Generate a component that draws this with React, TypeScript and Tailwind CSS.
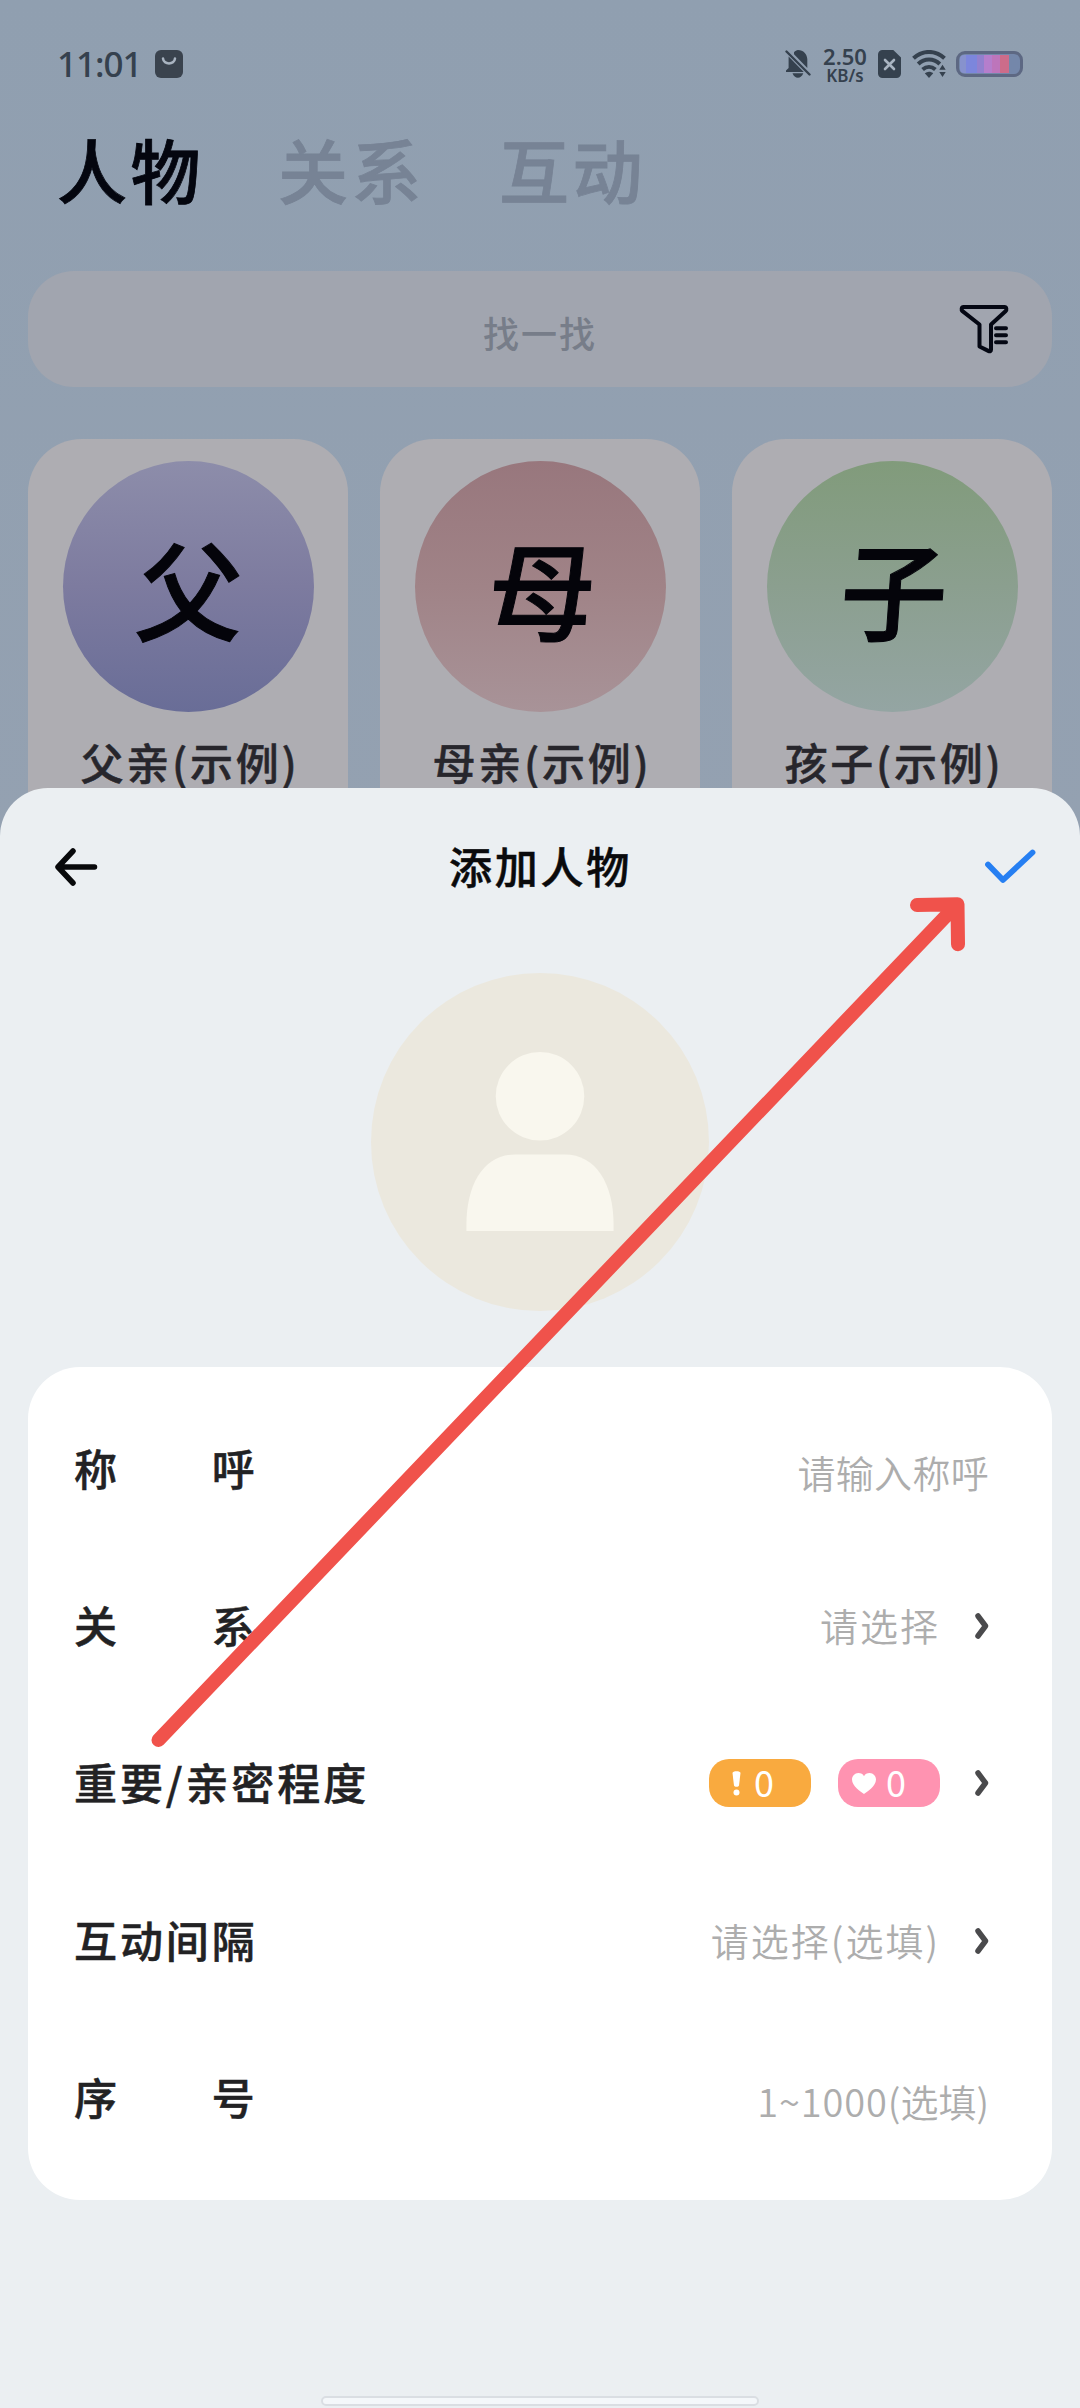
import type { ReactNode } from 'react';

const tabs = ['人物', '关系', '互动'];

const people = [
  { mark: '父', name: '父亲(示例)', tone: 'from-[#8d8daa] via-[#7d7b9f] to-[#696d97]' },
  { mark: '母', name: '母亲(示例)', tone: 'from-[#98777d] via-[#a08387] to-[#a89398]' },
  { mark: '子', name: '孩子(示例)', tone: 'from-[#819b7b] via-[#8b9f8f] to-[#94a5a3]' },
];

function BellOffIcon() {
  return (
    <svg className="h-[30px] w-[26px]" viewBox="0 0 26 30" fill="#35414e">
      <path d="M9 3.200C10.400 1.700 11.500 1 13 .9c5.500.2 9 4 9.300 9v9L9 5.200zM3.600 7.600 18.800 23H1v-1.500l2.600-2.500zM7.500 24.300h10.800c-1.200 3-3 4.400-5.400 4.400s-4.300-1.400-5.400-4.400z" />
      <path d="M1.500 2.500 24.500 25.500" stroke="#35414e" strokeWidth="2.400" strokeLinecap="round" />
    </svg>
  );
}

function SimIcon() {
  return (
    <svg className="h-7 w-[23px]" viewBox="0 0 23 28">
      <path d="M4.500 0h10.800L23 7.500v16a4.500 4.500 0 0 1-4.500 4.500h-14A4.500 4.500 0 0 1 0 23.500v-19A4.500 4.500 0 0 1 4.500 0z" fill="#35414e" />
      <path d="m7 10 9 9m0-9-9 9" stroke="#a9b4c1" strokeWidth="2.600" strokeLinecap="round" />
    </svg>
  );
}

function WifiIcon() {
  return (
    <svg className="h-7 w-[35px]" viewBox="0 0 35 28" fill="none" stroke="#35414e" strokeWidth="4">
      <path d="M1.500 8.300C10.500-.2 23.500-.2 32.500 8.300" />
      <path d="M6.200 14C12.500 8 21.500 8 27.800 14" />
      <path d="M10.600 19.500c4-3.500 8.800-3.500 12.800 0" />
      <path d="M12.800 23.300c2.600-2 5.800-2 8.400 0L17 28z" fill="#35414e" stroke="none" />
      <path d="m30.500 14.800 3.200 5h-6.400zM30.500 27l3.200-5h-6.400z" fill="#35414e" stroke="none" />
    </svg>
  );
}

function Battery() {
  return (
    <div className="flex h-[26px] w-[67px] rounded-[9px] border-[3px] border-[#5d6883] bg-[#7487aa] p-[1px]">
      <div className="w-[49px] rounded-l-[4px] bg-[linear-gradient(90deg,#8792cd_0_6px,#7c86dc_6px_17px,#9280ce_17px_24px,#b57ecc_24px_32px,#bd75bb_32px_40px,#cc6c8a_40px)]" />
    </div>
  );
}

function StatusBar() {
  return (
    <div className="flex h-[124px] items-start justify-between pt-[46px] pr-[57px] pl-[57px]">
      <div className="flex h-9 items-center">
        <span className="w-[98px] font-['Noto_Sans'] text-[35px] leading-9 font-medium tracking-[-1px] text-[#35414e]">11:01</span>
        <svg className="size-7" viewBox="0 0 28 28">
          <rect width="28" height="28" rx="6" fill="#3a434e" />
          <path d="M8 8.500c.7 6.500 11.300 6.500 12 0" fill="none" stroke="#a9b4c1" strokeWidth="2.500" strokeLinecap="round" />
        </svg>
      </div>
      <div className="flex h-9 items-center">
        <BellOffIcon />
        <div className="ml-[10px] flex w-[48px] flex-col items-center font-['Noto_Sans'] font-semibold text-[#35414e]">
          <span className="text-[22px] leading-[22px]">2.50</span>
          <span className="text-[17px] leading-[17px]">KB/s</span>
        </div>
        <div className="ml-[9px]"><SimIcon /></div>
        <div className="ml-[11px]"><WifiIcon /></div>
        <div className="ml-[9px]"><Battery /></div>
      </div>
    </div>
  );
}

function FilterIcon() {
  return (
    <svg className="h-[50px] w-[50px]" viewBox="0 0 50 50" fill="none" stroke="#050814" strokeWidth="4" strokeLinecap="round" strokeLinejoin="round">
      <path d="M4.500 3h41c2 0 2.500 2.800 1 4.200L32 20.500v25c0 1.500-1 2.200-2.200 1.600l-9.300-4.600v-22L3.500 7.200C2 5.800 2.500 3 4.500 3z" />
      <path d="M37 24.300h10M37 31.300h10M37 38.300h10" />
    </svg>
  );
}

function Chevron() {
  return (
    <svg className="mt-[2px] ml-[37px] h-[26px] w-[14px]" viewBox="0 0 14 26" fill="none" stroke="#4a4a4c" strokeWidth="5.500" strokeLinecap="round" strokeLinejoin="round">
      <path d="m3 3 7.500 10L3 23" />
    </svg>
  );
}

function Row({ label, children }: { label: string; children: ReactNode }) {
  return (
    <div className="flex h-[157.400px] items-center justify-between">
      <span className="mb-[2px] text-[43px] leading-[60px] font-medium tracking-[2.900px] whitespace-pre text-[#222224] [-webkit-text-stroke:0.500px]">{label}</span>
      <div className="flex items-center text-[38px] leading-[54px] font-[350] text-[#adadad]">{children}</div>
    </div>
  );
}

function AddPersonSheet() {
  return (
    <div className="absolute inset-x-0 top-[788px] bottom-0 flex flex-col rounded-t-[48px] bg-[#ebeff2]">
      <div className="flex h-[158px] items-center justify-between pr-[44px] pl-[54px]">
        <svg className="h-[38px] w-[52px]" viewBox="0 0 52 38" fill="none" stroke="#08090b" strokeWidth="5.500" strokeLinecap="round" strokeLinejoin="round">
          <path d="M19 3 4 19l15 16M5 19h35.500" />
        </svg>
        <h2 className="mr-[9px] mb-[4px] text-[43px] leading-[60px] font-medium tracking-[2.700px] text-[#0a0a0c] [-webkit-text-stroke:0.500px]">添加人物</h2>
        <svg className="h-9 w-[52px]" viewBox="0 0 52 36" fill="none" stroke="#267ff2" strokeWidth="5.800" strokeLinecap="round" strokeLinejoin="round">
          <path d="M4 15.500 19 31 48.500 3.500" />
        </svg>
      </div>

      <div className="mt-[27px] flex size-[338px] items-center justify-center self-center rounded-full bg-[#ebe8de]">
        <svg className="mb-[2px] h-[179px] w-[148px]" viewBox="0 0 148 180" fill="#f9f7ee">
          <circle cx="74" cy="44.500" r="44.500" />
          <path d="M0 180v-6c0-42 18-71 49-71h50c31 0 49 29 49 71v6z" />
        </svg>
      </div>

      <div className="mx-7 mt-[56px] h-[833px] rounded-[52px] bg-white pt-[22px] pr-[63px] pl-[46px]">
        <Row label="称　　呼">
          <span className="relative top-[4px] tracking-[0.300px]">请输入称呼</span>
        </Row>
        <Row label="关　　系">
          <span className="-mr-[2px] tracking-[2px]">请选择</span>
          <Chevron />
        </Row>
        <Row label="重要/亲密程度">
          <div className="mt-[2px] flex h-12 w-[102px] items-center rounded-[20px] bg-[#f9aa3f] pl-[23px] text-white">
            <svg className="h-[26px] w-[9px]" viewBox="0 0 9 26" fill="white">
              <path d="M.5 3C.5.500 8.500.500 8.500 3L7 15.500c-.3 1.800-4.700 1.800-5 0z" />
              <circle cx="4.500" cy="22.500" r="3" />
            </svg>
            <span className="mb-[4px] ml-[13px] text-[36px] leading-[48px] font-normal">0</span>
          </div>
          <div className="mt-[2px] ml-[27px] flex h-12 w-[102px] items-center rounded-[20px] bg-[#ff93b1] pl-[14px] text-white">
            <svg className="h-[21px] w-[24px]" viewBox="0 0 24 21" fill="white">
              <path d="M12 21C9 19 0 13 0 6.500 0 3 2.800 0 6.300 0 9 0 11 1.200 12 3.200 13 1.200 15 0 17.700 0 21.200 0 24 3 24 6.500 24 13 15 19 12 21z" />
            </svg>
            <span className="mb-[4px] ml-[10px] text-[36px] leading-[48px] font-normal">0</span>
          </div>
          <div className="-ml-[2px]"><Chevron /></div>
        </Row>
        <Row label="互动间隔">
          <span className="-mr-[2px] tracking-[2px]">请选择(选填)</span>
          <Chevron />
        </Row>
        <Row label="序　　号">
          <span className="relative top-[4px]"><span className="tracking-[0.900px]">1~1000</span>(选填)</span>
        </Row>
      </div>

      <div className="mt-auto mb-[2px] h-[10px] w-[438px] self-center rounded-full border-2 border-[#dadee3] bg-[#f4f7fa]" />
    </div>
  );
}

export default function App() {
  return (
    <div className="relative h-[2408px] w-[1080px] overflow-hidden bg-gradient-to-b from-[#909fb0] to-[#94a1b1] to-35% font-['Noto_Sans_CJK_SC',sans-serif]">
      <StatusBar />

      <div className="flex h-[147px] gap-[74px] pl-[57px]">
        {tabs.map((tab, i) => (
          <span
            key={tab}
            className={`text-[70px] leading-[90px] font-medium tracking-[3.500px] [-webkit-text-stroke:0.800px] ${i === 0 ? 'text-[#04060f]' : 'text-[#778395]'}`}
          >
            {tab}
          </span>
        ))}
      </div>

      <div className="relative mx-7 flex h-[116px] items-center justify-center rounded-[46px] bg-[#a1a5af]">
        <span className="mt-[6px] text-[36px] leading-[54px] font-medium tracking-[2px] text-[#777d89]">找一找</span>
        <div className="absolute top-[33px] right-[43px]"><FilterIcon /></div>
      </div>

      <div className="mx-7 mt-[52px] grid grid-cols-3 gap-8">
        {people.map((p) => (
          <div key={p.name} className="flex h-[420px] flex-col items-center rounded-[54px] bg-[#aeadb2] pt-[22px]">
            <div className={`flex size-[251px] items-center justify-center rounded-full bg-gradient-to-b ${p.tone}`}>
              <span className="ml-[6px] -skew-x-[4deg] text-[107px] leading-[150px] font-medium text-[#04040a] [-webkit-text-stroke:1px]">{p.mark}</span>
            </div>
            <span className="mt-[19px] ml-[4px] text-[43px] leading-[60px] font-medium tracking-[2.700px] text-[#27262c] [-webkit-text-stroke:0.500px]">{p.name}</span>
          </div>
        ))}
      </div>

      <AddPersonSheet />

      {/* Pointer from the form up to the confirm button */}
      <svg className="absolute inset-0 h-full w-full" viewBox="0 0 1080 2408" fill="none" stroke="#f0524b" strokeWidth="14" strokeLinecap="round" strokeLinejoin="round">
        <path d="M158.500 1740 957 904.500M917 905l40.500-.8.500 40" />
      </svg>
    </div>
  );
}
